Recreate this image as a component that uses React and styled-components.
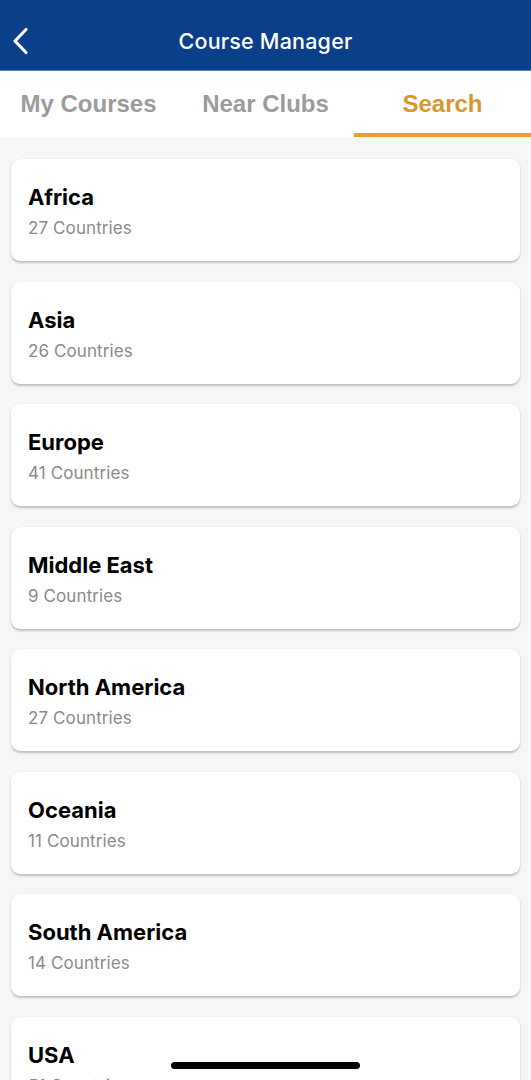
import styled, { createGlobalStyle } from "styled-components";

const GlobalStyle = createGlobalStyle`
  html, body {
    margin: 0;
    padding: 0;
    background: #f6f6f6;
  }
  * {
    box-sizing: border-box;
  }
`;

const Screen = styled.div`
  width: 531px;
  min-height: 1080px;
  background: #f6f6f6;
  font-family: Inter, "Liberation Sans", sans-serif;
`;

const Header = styled.header`
  height: 71px;
  background: #0b3f8a;
  display: flex;
  align-items: center;
  justify-content: center;
  position: relative;
  padding-top: 12px;
  border-bottom: 1px solid #5a7fb8;
`;

const BackButton = styled.div`
  position: absolute;
  left: 11px;
  top: 27px;
  width: 20px;
  height: 28px;
  display: flex;
  align-items: center;
`;

const Title = styled.h1`
  margin: 0;
  color: #ffffff;
  font-size: 21.5px;
  font-weight: 500;
  letter-spacing: 0.2px;
`;

const Tabs = styled.nav`
  height: 66px;
  background: #ffffff;
  display: grid;
  grid-template-columns: 1fr 1fr 1fr;
`;

const Tab = styled.div`
  display: flex;
  align-items: center;
  justify-content: center;
  font-family: "Liberation Sans", Arial, sans-serif;
  font-size: 24px;
  font-weight: 700;
  color: ${(p) => (p.active ? "#d9962f" : "#9b9b9b")};
  border-bottom: 4px solid ${(p) => (p.active ? "#ee9a2c" : "transparent")};
  padding-top: 4px;
`;

const List = styled.div`
  display: flex;
  flex-direction: column;
  gap: 20.5px;
  padding: 22px 11px 0 11px;
`;

const Card = styled.div`
  background: #ffffff;
  border-radius: 9px;
  padding: 24px 17px 22px;
  box-shadow: 0 1.5px 2px rgba(0, 0, 0, 0.22), 0 0 1px rgba(0, 0, 0, 0.06);
`;

const Region = styled.div`
  font-size: 22px;
  line-height: 28px;
  font-weight: 700;
  color: #000000;
`;

const Count = styled.div`
  margin-top: 6px;
  font-size: 17px;
  line-height: 22px;
  color: #8a8a8a;
  letter-spacing: 0.1px;
`;

const HomeIndicator = styled.div`
  position: fixed;
  left: 171px;
  top: 1062px;
  width: 189px;
  height: 7px;
  border-radius: 4px;
  background: #000000;
`;

const regions = [
  { name: "Africa", count: 27 },
  { name: "Asia", count: 26 },
  { name: "Europe", count: 41 },
  { name: "Middle East", count: 9 },
  { name: "North America", count: 27 },
  { name: "Oceania", count: 11 },
  { name: "South America", count: 14 },
  { name: "USA", count: 51 },
];

const App = () => {
  return (
    <Screen>
      <GlobalStyle />
      <Header>
        <BackButton>
          <svg width="18" height="28" viewBox="0 0 18 28" fill="none">
            <path
              d="M15 2.5L4 14l11 11.5"
              stroke="#ffffff"
              strokeWidth="3.2"
              strokeLinecap="round"
              strokeLinejoin="round"
            />
          </svg>
        </BackButton>
        <Title>Course Manager</Title>
      </Header>
      <Tabs>
        <Tab>My Courses</Tab>
        <Tab>Near Clubs</Tab>
        <Tab active>Search</Tab>
      </Tabs>
      <List>
        {regions.map((r) => (
          <Card key={r.name}>
            <Region>{r.name}</Region>
            <Count>{r.count} Countries</Count>
          </Card>
        ))}
      </List>
      <HomeIndicator />
    </Screen>
  );
};

export default App;
